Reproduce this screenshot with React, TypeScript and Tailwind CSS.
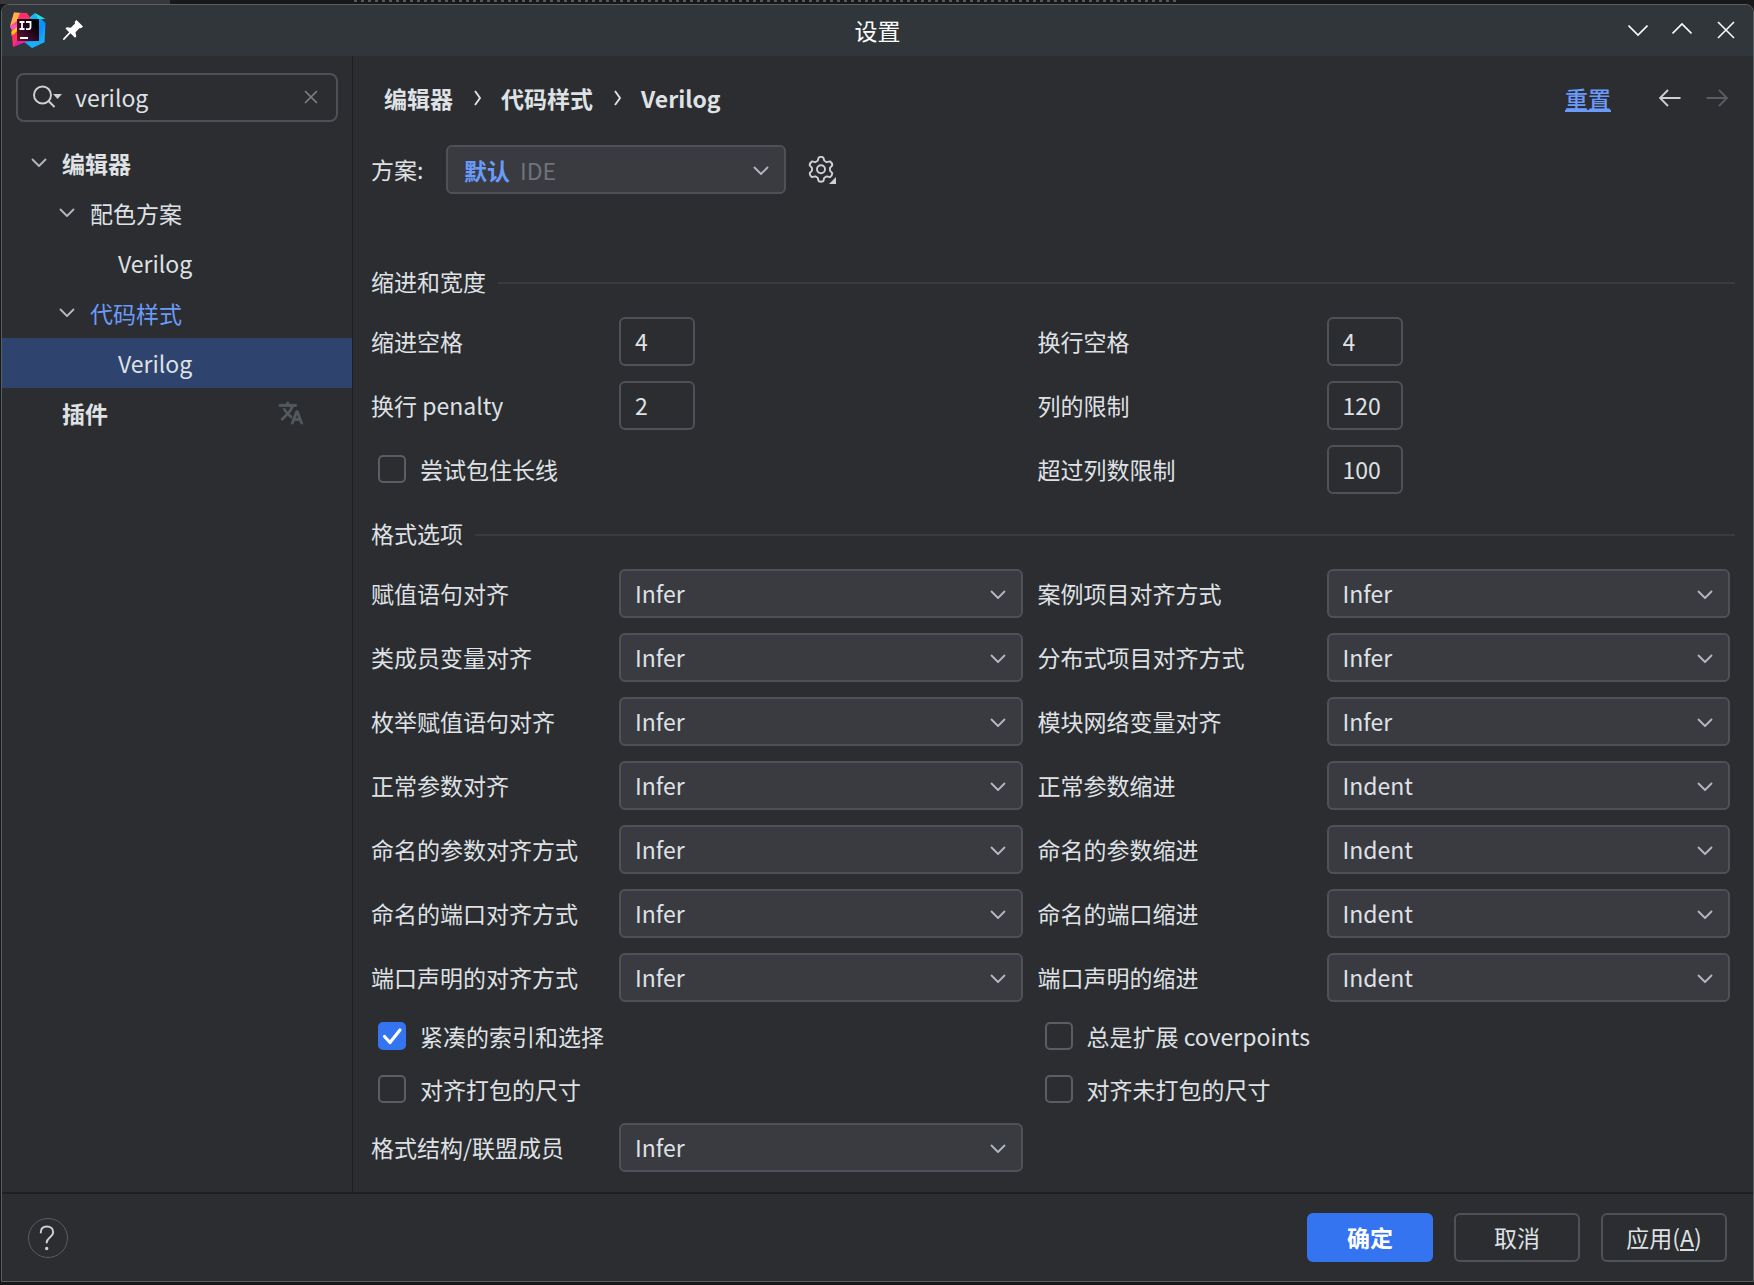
import { useState } from 'react';

interface SelectRow {
  left: string;
  leftValue: string;
  right: string;
  rightValue: string;
}

const formatRows: SelectRow[] = [
  { left: '赋值语句对齐', leftValue: 'Infer', right: '案例项目对齐方式', rightValue: 'Infer' },
  { left: '类成员变量对齐', leftValue: 'Infer', right: '分布式项目对齐方式', rightValue: 'Infer' },
  { left: '枚举赋值语句对齐', leftValue: 'Infer', right: '模块网络变量对齐', rightValue: 'Infer' },
  { left: '正常参数对齐', leftValue: 'Infer', right: '正常参数缩进', rightValue: 'Indent' },
  { left: '命名的参数对齐方式', leftValue: 'Infer', right: '命名的参数缩进', rightValue: 'Indent' },
  { left: '命名的端口对齐方式', leftValue: 'Infer', right: '命名的端口缩进', rightValue: 'Indent' },
  { left: '端口声明的对齐方式', leftValue: 'Infer', right: '端口声明的缩进', rightValue: 'Indent' },
];

function Chevron({ className = '' }: { className?: string }) {
  return (
    <svg className={className} width="16" height="10" viewBox="0 0 16 10" fill="none" stroke="currentColor" strokeWidth="1.8" strokeLinecap="round" strokeLinejoin="round" aria-hidden="true">
      <path d="M1.5 1.5 8 8l6.5-6.5" />
    </svg>
  );
}

function Select({ id, value }: { id: string; value: string }) {
  return (
    <div className="relative min-w-0">
      <select
        id={id}
        defaultValue={value}
        className="block h-[49px] w-full appearance-none rounded-md border-2 border-[#4e5157] bg-[#393b40] pb-0.5 pl-3.5 pr-10 outline-none focus:border-[#3574f0]"
      >
        <option>Infer</option>
        <option>Indent</option>
        <option>Align</option>
        <option>Preserve</option>
      </select>
      <Chevron className="pointer-events-none absolute right-[17px] top-[21px] text-[#b4b8bf]" />
    </div>
  );
}

function NumberField({ id, value }: { id: string; value: string }) {
  return (
    <input
      id={id}
      defaultValue={value}
      inputMode="numeric"
      className="h-[49px] w-[76px] rounded-md border-2 border-[#4e5157] bg-transparent px-3.5 pb-0.5 outline-none focus:border-[#3574f0]"
    />
  );
}

function Checkbox({ label, defaultChecked = false }: { label: string; defaultChecked?: boolean }) {
  return (
    <label className="flex items-center gap-3.5 pl-[7px]">
      <span className="relative h-7 w-7 shrink-0">
        <input
          type="checkbox"
          defaultChecked={defaultChecked}
          className="peer block h-7 w-7 appearance-none rounded-[5px] border-2 border-[#5a5d63] checked:border-[#3574f0] checked:bg-[#3574f0]"
        />
        <svg className="pointer-events-none absolute inset-0 hidden peer-checked:block" width="28" height="28" viewBox="0 0 28 28" fill="none" stroke="#fff" strokeWidth="3.2" strokeLinecap="round" strokeLinejoin="round" aria-hidden="true">
          <path d="M6.5 14.5 12 20.500 22 8" />
        </svg>
      </span>
      {label}
    </label>
  );
}

function SectionTitle({ children }: { children: string }) {
  return (
    <h2 className="-mr-[5px] flex h-9 items-center gap-3">
      <span className="pb-1">{children}</span>
      <span className="h-0.5 flex-1 bg-[#393b40]" />
    </h2>
  );
}

function Logo() {
  return (
    <svg width="36" height="36" viewBox="0 0 36 36" aria-hidden="true">
      <defs>
        <linearGradient id="ij-blue" x1="0" y1="0" x2="1" y2="1">
          <stop offset="0" stopColor="#18d6e8" />
          <stop offset="0.6" stopColor="#0a8cff" />
          <stop offset="1" stopColor="#21c8f5" />
        </linearGradient>
        <linearGradient id="ij-core" x1="0" y1="1" x2="1" y2="0">
          <stop offset="0" stopColor="#6b1f1a" />
          <stop offset="0.35" stopColor="#3a0c2a" />
          <stop offset="0.75" stopColor="#050505" />
        </linearGradient>
      </defs>
      <path d="M20 5 25 1l10.500 10L34.500 30 22 36l-8-6Z" fill="url(#ij-blue)" />
      <path d="M25 1l3 6h7.500Z" fill="#22e0e6" />
      <path d="M29 29l5.500 1L22 36l-7-6Z" fill="#19aef7" />
      <path d="M4 0.500 16 1l5 6-14 5-7 4Z" fill="#fb4a7c" />
      <path d="M4 0.500 10 1 7 9l-7 5Z" fill="#fdb04c" />
      <path d="M10 1h7l4 6H8Z" fill="#ff2d6c" />
      <path d="M0 14l7-2v8l-6 4 1-5Z" fill="#f458c0" />
      <path d="M1 20l6-5v8l-4 1Z" fill="#ffc400" />
      <path d="M2 24l5-5v10h10L3 35Z" fill="#ff3267" />
      <path d="M7 29h11L3 35Z" fill="#e11fa6" />
      <rect x="7" y="7" width="22" height="22" fill="url(#ij-core)" />
      <path d="M9.500 10h5M12 10v7M9.500 17h5M16 10h4.500v5q0 2.200-2.200 2.200H16M10 26h8" fill="none" stroke="#fff" strokeWidth="1.800" />
    </svg>
  );
}

function TitleBar() {
  return (
    <header className="grid h-[51px] shrink-0 grid-cols-[1fr_auto_1fr] items-center bg-[#31363b] pb-0.5 text-[#fcfcfc]">
      <div className="flex items-center gap-[17px] pl-2">
        <Logo />
        <button aria-label="置顶">
          <svg className="block" width="20" height="20" viewBox="0 0 20 20" fill="#fff" aria-hidden="true">
            <path d="M13.500 0 20 6.500l-2 1.800-1.300-.3-4.200 4.200.8 4.300-1.300 1.300-4.500-4.500L1.200 20 0 19.800 .2 18.600l6-6.300L2.500 8.500l1.300-1.300 4 .6L12 3.600l-.3-1.800Z" />
          </svg>
        </button>
      </div>
      <h1>设置</h1>
      <div className="flex items-center justify-end gap-6 pr-[17px]">
        <button aria-label="最小化">
          <svg className="block" width="20" height="18" viewBox="0 0 20 18" fill="none" stroke="currentColor" strokeWidth="1.600" aria-hidden="true"><path d="M0.500 4.500 10 14l9.500-9.500" /></svg>
        </button>
        <button aria-label="最大化">
          <svg className="block" width="20" height="18" viewBox="0 0 20 18" fill="none" stroke="currentColor" strokeWidth="1.600" aria-hidden="true"><path d="M0.500 12.500 10 3l9.500 9.500" /></svg>
        </button>
        <button aria-label="关闭">
          <svg className="block" width="20" height="18" viewBox="0 0 20 18" fill="none" stroke="currentColor" strokeWidth="1.600" aria-hidden="true"><path d="m2 1 16 16M18 1 2 17" /></svg>
        </button>
      </div>
    </header>
  );
}

function Sidebar({ query, onQuery }: { query: string; onQuery: (value: string) => void }) {
  return (
    <aside className="w-[351px] shrink-0 border-r border-[#1e1f22]">
      <div className="mx-3.5 mb-4 mt-[17px] flex h-[49px] items-center rounded-lg border-2 border-[#4e5157] pb-0.5 pl-[15px] pr-[18px]">
        <svg className="shrink-0" width="30" height="24" viewBox="0 0 30 24" fill="none" aria-hidden="true">
          <circle cx="9.500" cy="10" r="8.500" stroke="#ced0d6" strokeWidth="1.900" />
          <path d="m15.500 16 6 6" stroke="#ced0d6" strokeWidth="1.900" />
          <path d="M20 9h9l-4.500 5Z" fill="#ced0d6" />
        </svg>
        <input
          aria-label="搜索设置"
          value={query}
          onChange={(e) => onQuery(e.target.value)}
          className="ml-3 min-w-0 flex-1 bg-transparent outline-none"
        />
        <button aria-label="清除" onClick={() => onQuery('')}>
          <svg className="block" width="14" height="14" viewBox="0 0 14 14" stroke="#7c7f86" strokeWidth="1.700" aria-hidden="true"><path d="m1 1 12 12M13 1 1 13" /></svg>
        </button>
      </div>
      <nav aria-label="设置分类">
        <a href="#editor" className="flex h-[50px] items-center gap-[15px] pl-[29px] font-bold">
          <Chevron className="text-[#b4b8bf]" />编辑器
        </a>
        <a href="#color-scheme" className="flex h-[50px] items-center gap-[15px] pl-[57px]">
          <Chevron className="text-[#b4b8bf]" />配色方案
        </a>
        <a href="#color-scheme-verilog" className="flex h-[50px] items-center pl-[116px]">Verilog</a>
        <a href="#code-style" className="flex h-[50px] items-center gap-[15px] pl-[57px] text-[#6b9bfa]">
          <Chevron className="text-[#b4b8bf]" />代码样式
        </a>
        <a href="#code-style-verilog" aria-current="page" className="flex h-[50px] items-center bg-[#2e436e] pl-[116px]">Verilog</a>
        <a href="#plugins" className="flex h-[50px] items-center justify-between pl-[60px] pr-12 font-bold">
          插件
          <svg width="26" height="26" viewBox="0 0 24 24" fill="#545a5f" stroke="#545a5f" strokeWidth="0.7" aria-hidden="true">
            <path d="m12.870 15.070-2.540-2.510.03-.03c1.740-1.940 2.980-4.170 3.710-6.530H17V4h-7V2H8v2H1v1.990h11.170C11.500 7.920 10.440 9.750 9 11.350 8.070 10.320 7.300 9.190 6.690 8h-2c.73 1.630 1.730 3.170 2.980 4.560l-5.090 5.020L4 19l5-5 3.110 3.110.76-2.040zM18.500 10h-2L12 22h2l1.120-3h4.750L21 22h2l-4.500-12zm-2.620 7 1.620-4.330L19.120 17h-3.240z" />
          </svg>
        </a>
      </nav>
    </aside>
  );
}

function Crumb() {
  return (
    <svg width="10" height="16" viewBox="0 0 10 16" fill="none" stroke="#dfe1e5" strokeWidth="1.900" aria-hidden="true">
      <path d="m3 1 5 7-5 7" />
    </svg>
  );
}

export default function App() {
  const [query, setQuery] = useState('verilog');

  return (
    <div className="flex min-h-screen flex-col bg-[#17181a] pb-[3px] font-['Noto_Sans_CJK_SC',sans-serif] text-[23px] leading-9 text-[#dfe1e5]">
      {/* sliver of the editor window behind the dialog */}
      <div className="flex h-1 shrink-0">
        <div className="w-[170px] bg-[#36383b]" />
        <div className="w-[184px]" />
        <div className="h-0.5 w-[47%] bg-[repeating-linear-gradient(90deg,#55585c_0px,#55585c_3px,transparent_3px,transparent_7px)]" />
      </div>
      <div className="ml-px flex flex-1 flex-col overflow-hidden rounded-t-lg border border-[#5b5e62] bg-[#2b2d30]">
        <TitleBar />
        <div className="flex flex-1">
          <Sidebar query={query} onQuery={setQuery} />
          <main className="min-w-0 flex-1 pb-4 pl-[18px] pr-[23px]">
            <div className="flex h-[89px] items-center justify-between pb-[5px] pl-[13px] pr-0.5">
              <nav aria-label="路径" className="flex items-center gap-[19px] font-bold">
                <span>编辑器</span>
                <Crumb />
                <span>代码样式</span>
                <Crumb />
                <span>Verilog</span>
              </nav>
              <div className="flex items-center">
                <a href="#reset" className="font-medium text-[#6b9bfa] underline">重置</a>
                <button aria-label="后退" className="ml-12">
                  <svg className="block" width="22" height="18" viewBox="0 0 22 18" fill="none" stroke="#ced0d6" strokeWidth="1.800" aria-hidden="true"><path d="M21.500 9H1.500M9 1 1 9l8 8" /></svg>
                </button>
                <button aria-label="前进" disabled className="ml-[25px]">
                  <svg className="block" width="22" height="18" viewBox="0 0 22 18" fill="none" stroke="#5a5d63" strokeWidth="1.800" aria-hidden="true"><path d="M0.500 9h20M13 1l8 8-8 8" /></svg>
                </button>
              </div>
            </div>

            <div className="flex items-center">
              <label htmlFor="scheme" className="w-[75px] pb-0.5">方案:</label>
              <div className="relative w-[340px]">
                <select id="scheme" className="block h-[49px] w-full appearance-none rounded-md border-2 border-[#4e5157] bg-[#393b40] pl-4 font-bold text-[#6b9bfa] outline-none">
                  <option>默认</option>
                  <option>项目</option>
                </select>
                <span className="pointer-events-none absolute left-[74px] top-[7px] text-[#6f737a]">IDE</span>
                <Chevron className="pointer-events-none absolute right-[17px] top-[21px] text-[#b4b8bf]" />
              </div>
              <button aria-label="方案操作" className="ml-[22px]">
                <svg className="block" width="28" height="28" viewBox="0 0 28 28" fill="none" stroke="#ced0d6" strokeWidth="1.900" strokeLinejoin="round" aria-hidden="true">
                  <path d="M10.700 1.500q2.300-1.200 4.600 0l1 3.300 2.400 1.400 3.300-.8q2.200 1.400 2.300 4l-2.300 2.500v2.800l2.300 2.500q-.1 2.600-2.300 4l-3.300-.8-2.400 1.400-1 3.300q-2.300 1.200-4.600 0l-1-3.300-2.400-1.400-3.300.8q-2.200-1.400-2.300-4L4 14.700v-2.800L1.700 9.400q.1-2.600 2.300-4l3.300.8 2.400-1.400Z" />
                  <circle cx="13" cy="13.300" r="4" />
                  <path d="M28 21v7h-7Z" fill="#ced0d6" stroke="none" />
                </svg>
              </button>
            </div>

            <section className="mt-[71px]">
              <SectionTitle>缩进和宽度</SectionTitle>
              <div className="mt-4 grid grid-cols-[248px_1fr_304px_1fr] items-center gap-y-[15px]">
                <label htmlFor="indent" className="pb-0.5">缩进空格</label>
                <NumberField id="indent" value="4" />
                <label htmlFor="wrap-spaces" className="pb-0.5 pl-[15px]">换行空格</label>
                <NumberField id="wrap-spaces" value="4" />
                <label htmlFor="penalty" className="pb-0.5">换行 penalty</label>
                <NumberField id="penalty" value="2" />
                <label htmlFor="column-limit" className="pb-0.5 pl-[15px]">列的限制</label>
                <NumberField id="column-limit" value="120" />
                <div className="col-span-2 pb-0.5">
                  <Checkbox label="尝试包住长线" />
                </div>
                <label htmlFor="over-limit" className="pb-0.5 pl-[15px]">超过列数限制</label>
                <NumberField id="over-limit" value="100" />
              </div>
            </section>

            <section className="mt-[23px]">
              <SectionTitle>格式选项</SectionTitle>
              <div className="mt-4 grid grid-cols-[248px_1fr_304px_1fr] items-center gap-y-[15px]">
                {formatRows.map((row, i) => (
                  <div key={row.left} className="contents">
                    <label htmlFor={`left-${i}`} className="pb-0.5">{row.left}</label>
                    <Select id={`left-${i}`} value={row.leftValue} />
                    <label htmlFor={`right-${i}`} className="pb-0.5 pl-[15px]">{row.right}</label>
                    <Select id={`right-${i}`} value={row.rightValue} />
                  </div>
                ))}
              </div>
              <div className="my-4 grid grid-cols-[248px_1fr_304px_1fr] gap-y-[17px]">
                <div className="col-span-2">
                  <Checkbox label="紧凑的索引和选择" defaultChecked />
                </div>
                <div className="col-span-2 pl-[15px]">
                  <Checkbox label="总是扩展 coverpoints" />
                </div>
                <div className="col-span-2">
                  <Checkbox label="对齐打包的尺寸" />
                </div>
                <div className="col-span-2 pl-[15px]">
                  <Checkbox label="对齐未打包的尺寸" />
                </div>
              </div>
              <div className="grid grid-cols-[248px_1fr_304px_1fr] items-center">
                <label htmlFor="struct-members" className="pb-0.5">格式结构/联盟成员</label>
                <Select id="struct-members" value="Infer" />
              </div>
            </section>
          </main>
        </div>

        <footer className="flex h-[89px] shrink-0 items-center justify-between border-t-2 border-[#1e1f22] px-[26px]">
          <button aria-label="帮助" className="flex h-10 w-10 items-center justify-center rounded-full border border-[#5a5d63] pr-0.5">
            <svg width="16" height="26" viewBox="0 0 16 26" fill="none" stroke="#ced0d6" strokeWidth="2" strokeLinecap="round" aria-hidden="true">
              <path d="M1.800 7.500C1.800 3.500 4.500 1.500 8 1.500s6.200 2.200 6.200 5.800c0 4.700-6.500 5.200-6.500 10.200" />
              <circle cx="7.700" cy="23.500" r=".7" fill="#ced0d6" />
            </svg>
          </button>
          <div className="flex gap-[21px]">
            <button className="h-[49px] w-[126px] rounded-md bg-[#3574f0] pb-0.5 font-bold text-white">确定</button>
            <button className="h-[49px] w-[126px] rounded-md border-2 border-[#4e5157] pb-0.5">取消</button>
            <button className="h-[49px] w-[126px] rounded-md border-2 border-[#4e5157] pb-0.5">应用(<u>A</u>)</button>
          </div>
        </footer>
      </div>
    </div>
  );
}
